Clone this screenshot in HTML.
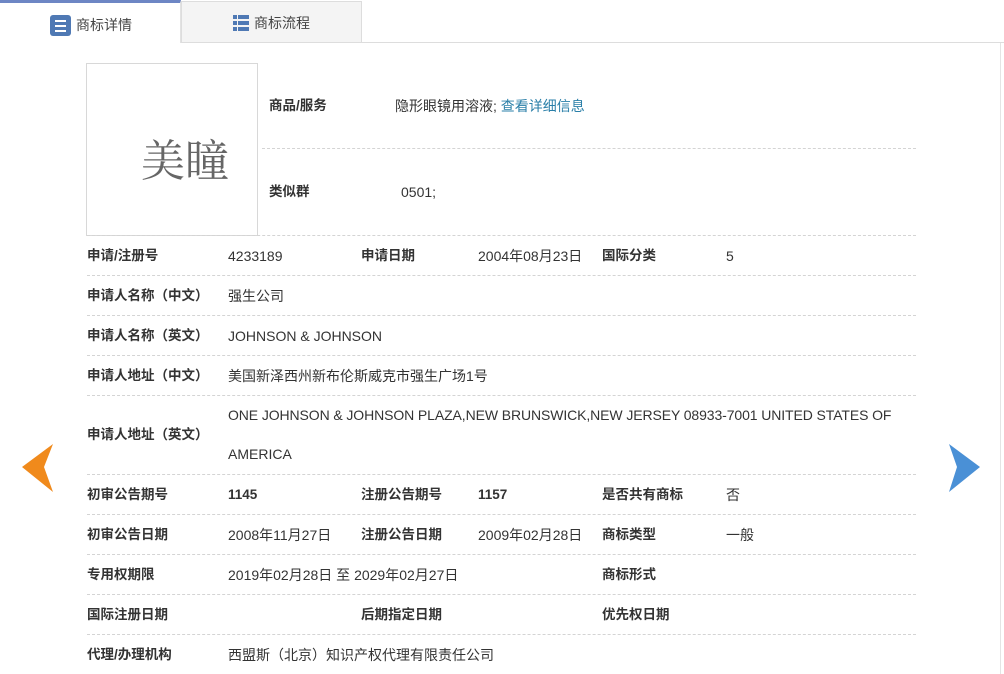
<!DOCTYPE html>
<html><head><meta charset="utf-8"><style>
*{margin:0;padding:0;box-sizing:border-box}
body{width:1004px;height:674px;background:#fff;position:relative;overflow:hidden;font-family:"Liberation Sans","Microsoft YaHei","Noto Sans CJK SC",sans-serif;font-size:14px;color:#333}
.a{position:absolute;white-space:nowrap;line-height:16px}
.b{font-weight:bold;color:#333;font-size:13.5px}
.l{position:absolute;left:87px;width:829px;border-top:1px dashed #d4d4d4;height:0}
</style></head><body>
<div style="position:absolute;left:0;top:42px;width:1004px;border-top:1px solid #ddd"></div>
<div style="position:absolute;left:0;top:0;width:181px;height:43px;background:#fff;border-top:3px solid #6d86c4;border-right:1px solid #e2e2e2"></div>
<div style="position:absolute;left:181px;top:1px;width:181px;height:41px;background:#f4f4f4;border:1px solid #ddd;border-bottom:none"></div>
<div style="position:absolute;left:50px;top:15px;width:21px;height:21px;background:#4f79b4;border-radius:3px">
<div style="position:absolute;left:5px;top:5px;width:11px;height:2px;background:#fff"></div>
<div style="position:absolute;left:5px;top:10px;width:11px;height:2px;background:#fff"></div>
<div style="position:absolute;left:5px;top:15px;width:11px;height:2px;background:#fff"></div></div>
<div class="a" style="left:76px;top:17px;font-size:14px;color:#444">商标详情</div>
<svg style="position:absolute;left:233px;top:15px" width="16" height="16"><g fill="#4f79b4"><rect x="0" y="0" width="4" height="4"/><rect x="5" y="0" width="11" height="4"/><rect x="0" y="6" width="4" height="4"/><rect x="5" y="6" width="11" height="4"/><rect x="0" y="12" width="4" height="4"/><rect x="5" y="12" width="11" height="4"/></g></svg>
<div class="a" style="left:254px;top:15px;font-size:14px;color:#444">商标流程</div>
<div style="position:absolute;left:1000px;top:43px;width:1px;height:631px;background:#e4e4e4"></div>

<div style="position:absolute;left:86px;top:63px;width:172px;height:173px;border:1px solid #d8d8d8"></div>
<div class="a" style="left:141px;top:138px;font-size:44px;line-height:48px;color:#666;font-family:'Liberation Serif','Noto Serif CJK SC',serif">美瞳</div>
<div class="a b" style="left:269px;top:98px">商品/服务</div>
<div class="a" style="left:395px;top:98px">隐形眼镜用溶液; <span style="color:#2a7fa8">查看详细信息</span></div>
<div class="l" style="left:262px;width:654px;top:148px"></div>
<div class="a b" style="left:269px;top:184px">类似群</div>
<div class="a" style="left:401px;top:184px">0501;</div>

<div class="l" style="top:235px"></div>
<div class="a b" style="left:87px;top:248px">申请/注册号</div><div class="a" style="left:228px;top:248px">4233189</div>
<div class="a b" style="left:361px;top:248px">申请日期</div><div class="a" style="left:478px;top:248px">2004年08月23日</div>
<div class="a b" style="left:602px;top:248px">国际分类</div><div class="a" style="left:726px;top:248px">5</div>
<div class="l" style="top:275px"></div>
<div class="a b" style="left:87px;top:288px">申请人名称（中文）</div><div class="a" style="left:228px;top:288px">强生公司</div>
<div class="l" style="top:315px"></div>
<div class="a b" style="left:87px;top:328px">申请人名称（英文）</div><div class="a" style="left:228px;top:328px">JOHNSON &amp; JOHNSON</div>
<div class="l" style="top:355px"></div>
<div class="a b" style="left:87px;top:368px">申请人地址（中文）</div><div class="a" style="left:228px;top:368px">美国新泽西州新布伦斯威克市强生广场1号</div>
<div class="l" style="top:395px"></div>
<div class="a b" style="left:87px;top:427px">申请人地址（英文）</div>
<div class="a" style="left:228px;top:407px;letter-spacing:-0.1px">ONE JOHNSON &amp; JOHNSON PLAZA,NEW BRUNSWICK,NEW JERSEY 08933-7001 UNITED STATES OF</div>
<div class="a" style="left:228px;top:446px">AMERICA</div>
<div class="l" style="top:474px"></div>
<div class="a b" style="left:87px;top:487px">初审公告期号</div><div class="a b" style="left:228px;top:487px">1145</div>
<div class="a b" style="left:361px;top:487px">注册公告期号</div><div class="a b" style="left:478px;top:487px">1157</div>
<div class="a b" style="left:602px;top:487px">是否共有商标</div><div class="a" style="left:726px;top:487px">否</div>
<div class="l" style="top:514px"></div>
<div class="a b" style="left:87px;top:527px">初审公告日期</div><div class="a" style="left:228px;top:527px">2008年11月27日</div>
<div class="a b" style="left:361px;top:527px">注册公告日期</div><div class="a" style="left:478px;top:527px">2009年02月28日</div>
<div class="a b" style="left:602px;top:527px">商标类型</div><div class="a" style="left:726px;top:527px">一般</div>
<div class="l" style="top:554px"></div>
<div class="a b" style="left:87px;top:567px">专用权期限</div><div class="a" style="left:228px;top:567px">2019年02月28日 至 2029年02月27日</div>
<div class="a b" style="left:602px;top:567px">商标形式</div>
<div class="l" style="top:594px"></div>
<div class="a b" style="left:87px;top:607px">国际注册日期</div>
<div class="a b" style="left:361px;top:607px">后期指定日期</div>
<div class="a b" style="left:602px;top:607px">优先权日期</div>
<div class="l" style="top:634px"></div>
<div class="a b" style="left:87px;top:647px">代理/办理机构</div><div class="a" style="left:228px;top:647px">西盟斯（北京）知识产权代理有限责任公司</div>

<svg style="position:absolute;left:0;top:0" width="1004" height="674"><polygon points="22,467 53,444 44,467 53,492" fill="#f08a1c"/><polygon points="949,444 980,467 949,492 957,467" fill="#4a90d6"/></svg>
</body></html>
